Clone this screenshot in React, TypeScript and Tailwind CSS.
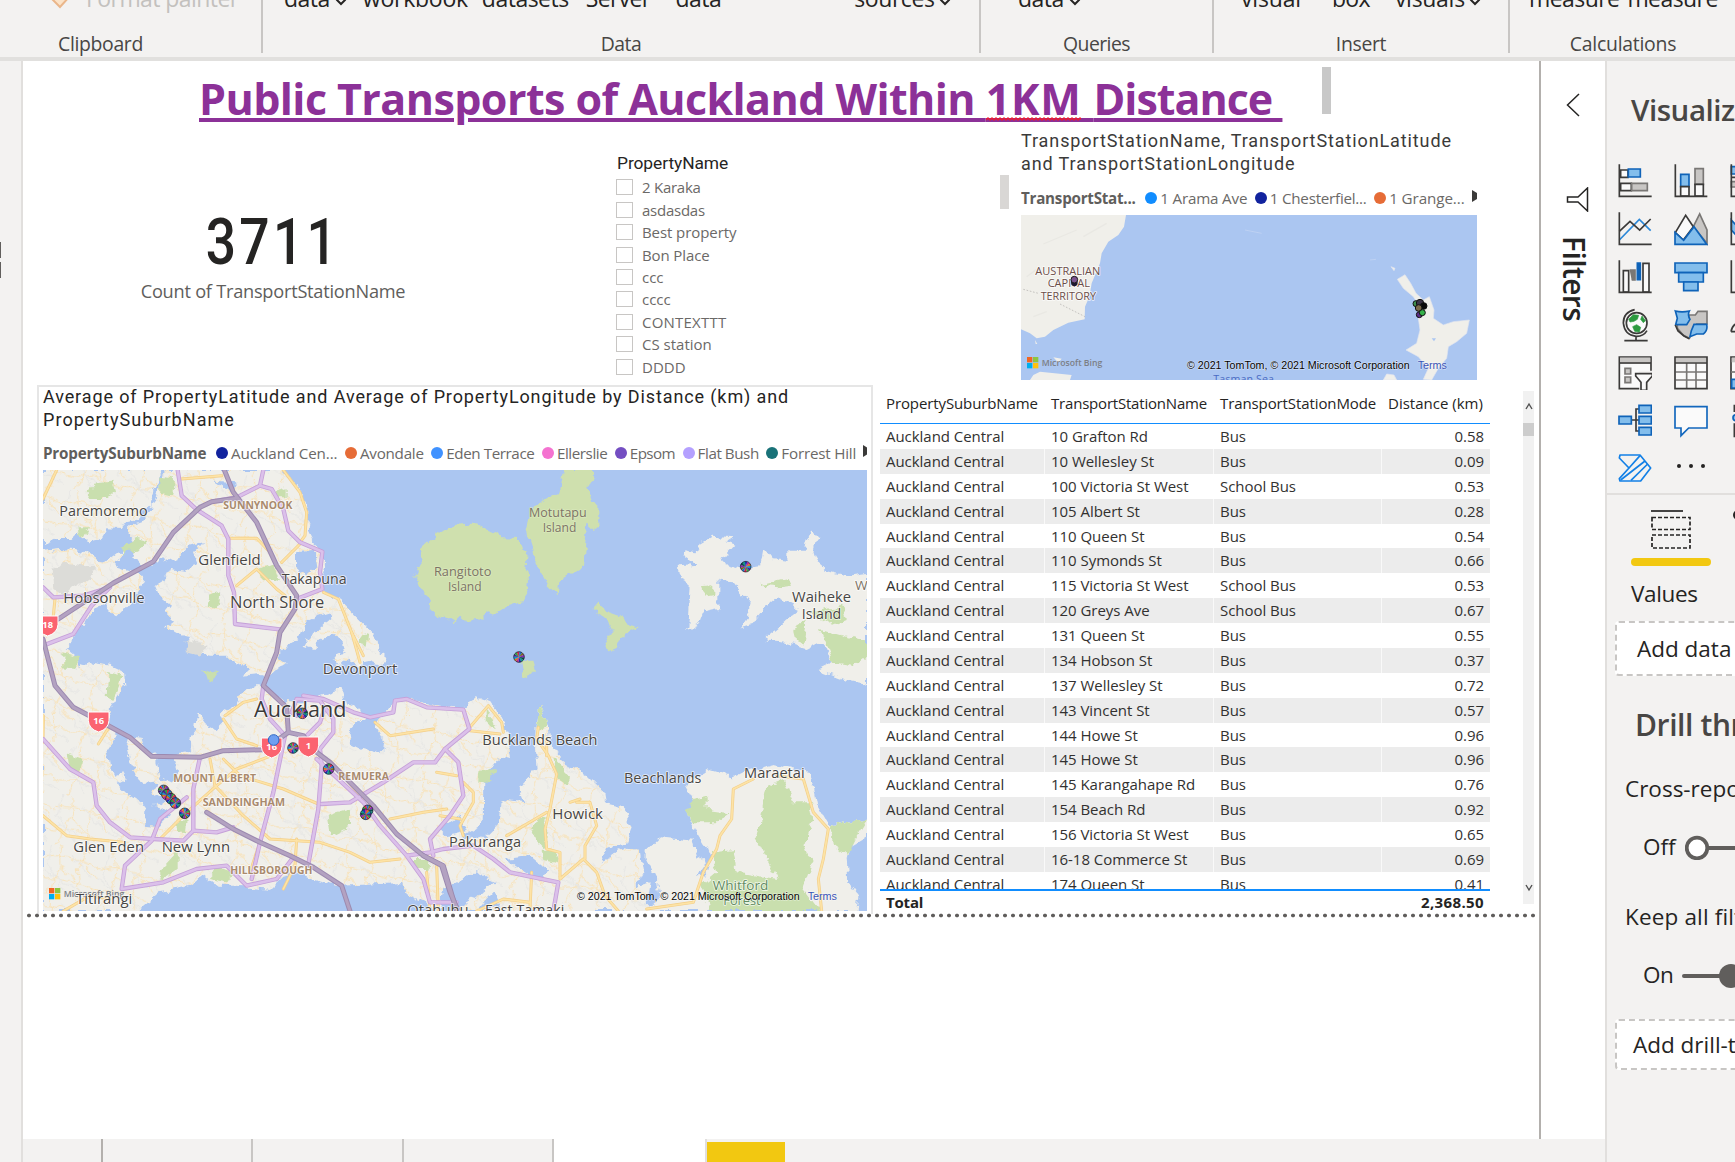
import { useLayoutEffect, useRef, useState, type ReactNode } from 'react';

/** Spreads its text evenly over a width of w pixels. */
function Fit({ w, className = '', children }: { w: number; className?: string; children: string }) {
  const ref = useRef<HTMLSpanElement>(null);
  const [spacing, setSpacing] = useState(0);
  useLayoutEffect(() => {
    if (ref.current) setSpacing((w - ref.current.offsetWidth) / children.length);
  }, [w, children]);
  return (
    <span ref={ref} className={`inline-block whitespace-pre ${className}`} style={{ letterSpacing: spacing }}>
      {children}
    </span>
  );
}

/* ---------- ribbon ---------- */

function Chevron({ className = '' }: { className?: string }) {
  return (
    <svg viewBox="0 0 12 8" className={`h-2 w-3 shrink-0 ${className}`}>
      <path d="M1.5 1.5 6 6l4.5-4.5" fill="none" stroke="#252423" strokeWidth="2" />
    </svg>
  );
}

function RibbonGroup({ label, labelWidth, className, children }: { label: string; labelWidth: number; className: string; children: ReactNode }) {
  return (
    <div className={`relative flex h-[53px] shrink-0 flex-col ${className}`}>
      <div className="-mt-[18px] flex h-8 items-center text-[23px] leading-8 text-[#252423]">{children}</div>
      <div className="mt-[18px] flex justify-center text-[19.4px] leading-6 text-[#484644]">
        <Fit w={labelWidth}>{label}</Fit>
      </div>
    </div>
  );
}

function Ribbon() {
  return (
    <div className="flex h-[61px] shrink-0 overflow-hidden border-b-4 border-[#e1e0de] bg-[#f3f2f1]">
      <RibbonGroup label="Clipboard" labelWidth={85} className="w-[263px] border-r-2 border-[#c8c6c4] pr-[60px]">
        <svg viewBox="0 0 24 20" className="mt-[7px] ml-12 h-5 w-6 shrink-0">
          <path d="M1 4 L12 15 L22 4 L12 0 Z" fill="#fbe3c8" stroke="#eab68a" strokeWidth="2" />
          <path d="M8 6 L17 7" stroke="#c8c6c4" strokeWidth="2" />
        </svg>
        <Fit w={153} className="ml-[14px] text-[#c3c1be]">Format painter</Fit>
      </RibbonGroup>
      <RibbonGroup label="Data" labelWidth={41} className="w-[718px] border-r-2 border-[#c8c6c4]">
        <Fit w={46} className="ml-[21px]">data</Fit>
        <Chevron className="mt-2 ml-[5px]" />
        <Fit w={105} className="ml-4">workbook</Fit>
        <Fit w={87} className="ml-[14px]">datasets</Fit>
        <Fit w={65} className="ml-[17px]">Server</Fit>
        <Fit w={46} className="ml-[25px]">data</Fit>
        <Fit w={80} className="ml-[133px]">sources</Fit>
        <Chevron className="mt-2 ml-[5px]" />
      </RibbonGroup>
      <RibbonGroup label="Queries" labelWidth={67} className="w-[233px] border-r-2 border-[#c8c6c4]">
        <Fit w={46} className="ml-[37px]">data</Fit>
        <Chevron className="mt-2 ml-[5px]" />
      </RibbonGroup>
      <RibbonGroup label="Insert" labelWidth={50} className="w-[296px] border-r-2 border-[#c8c6c4]">
        <Fit w={60} className="ml-[27px]">visual</Fit>
        <Fit w={38} className="ml-[31px]">box</Fit>
        <Fit w={70} className="ml-[25px]">visuals</Fit>
        <Chevron className="mt-2 ml-[4px]" />
      </RibbonGroup>
      <RibbonGroup label="Calculations" labelWidth={106} className="w-[226px]">
        <Fit w={90} className="ml-[19px]">measure</Fit>
        <Fit w={90} className="ml-[8px]">measure</Fit>
      </RibbonGroup>
    </div>
  );
}

/* ---------- legends ---------- */

type LegendItem = { name: string; w: number; dot: string };

const transportLegend: LegendItem[] = [
  { name: '1 Arama Ave', w: 87, dot: 'bg-[#118dff]' },
  { name: '1 Chesterfiel...', w: 97, dot: 'bg-[#12239e]' },
  { name: '1 Grange...', w: 75, dot: 'bg-[#e66c37]' },
];

const suburbLegend: LegendItem[] = [
  { name: 'Auckland Cen...', w: 106, dot: 'bg-[#12239e]' },
  { name: 'Avondale', w: 64, dot: 'bg-[#e66c37]' },
  { name: 'Eden Terrace', w: 88, dot: 'bg-[#4092ff]' },
  { name: 'Ellerslie', w: 50, dot: 'bg-[#f472d0]' },
  { name: 'Epsom', w: 45, dot: 'bg-[#744ec2]' },
  { name: 'Flat Bush', w: 61, dot: 'bg-[#b4a0ff]' },
  { name: 'Forrest Hill', w: 74.5, dot: 'bg-[#197278]' },
];

function Legend({ title, titleWidth, items }: { title: string; titleWidth: number; items: LegendItem[] }) {
  return (
    <div className="flex items-center overflow-hidden text-[15.2px] leading-6 text-[#6b6967]">
      <Fit w={titleWidth} className="mr-[2px] font-bold text-[#605e5c]">{title}</Fit>
      {items.map((item) => (
        <div key={item.name} className="ml-[7.6px] flex items-center gap-[3px]">
          <span className={`size-3 shrink-0 rounded-full ${item.dot}`} />
          <Fit w={item.w}>{item.name}</Fit>
        </div>
      ))}
      <svg viewBox="0 0 5 12" className="-mt-1 ml-[7px] h-3 w-[5px] shrink-0">
        <path d="M0 0 L10 6 L0 12Z" fill="#3b3a39" />
      </svg>
    </div>
  );
}

/* ---------- maps ---------- */

function MapText({ x, y, w, size, fill = '#484644', weight = 400, halo = '#ffffff', children }: { x: number; y: number; w: number; size: number; fill?: string; weight?: number; halo?: string; children: string }) {
  return (
    <text x={x} y={y} textLength={w} lengthAdjust="spacingAndGlyphs" fontSize={size} fontWeight={weight} fill={fill} stroke={halo} strokeWidth="5" strokeOpacity="0.75" strokeLinejoin="round" paintOrder="stroke">
      {children}
    </text>
  );
}

function BingMark({ x, y, w }: { x: number; y: number; w: number }) {
  return (
    <g>
      <rect x={x} y={y} width="16" height="16" fill="#f26522" />
      <rect x={x + 18} y={y} width="16" height="16" fill="#8dc63f" />
      <rect x={x} y={y + 18} width="16" height="16" fill="#00aeef" />
      <rect x={x + 18} y={y + 18} width="16" height="16" fill="#ffc20e" />
      <text x={x + 44} y={y + 27} textLength={w} lengthAdjust="spacingAndGlyphs" fontSize="29" fontWeight="600" fill="#7c7f86">Microsoft Bing</text>
    </g>
  );
}

function Attribution({ x, y }: { x: number; y: number }) {
  return (
    <g className="font-['Liberation_Sans']">
      <text x={x} y={y} fontSize="35" textLength="668" lengthAdjust="spacingAndGlyphs" fill="#000" stroke="#fff" strokeOpacity="0.6" strokeWidth="3" paintOrder="stroke">© 2021 TomTom, © 2021 Microsoft Corporation</text>
      <text x={x + 692} y={y} fontSize="35" textLength="88" lengthAdjust="spacingAndGlyphs" fill="#3a52b4" stroke="#fff" strokeOpacity="0.6" strokeWidth="3" paintOrder="stroke">Terms</text>
    </g>
  );
}

const pieColours = ['#0e9c86', '#1c2fae', '#c02a8e', '#d9771c', '#1596cf', '#4a2694', '#35a23a', '#d4264a', '#1a6fc9', '#7d6a1a', '#8d27b0', '#0a4a4a'];

function Pie({ x, y, turn = 0 }: { x: number; y: number; turn?: number }) {
  const r = 16;
  return (
    <g transform={`translate(${x} ${y}) rotate(${turn})`}>
      {pieColours.map((c, i) => {
        const a = (i * Math.PI) / 6;
        const b = ((i + 1) * Math.PI) / 6;
        return <path key={c} d={`M0 0L${r * Math.cos(a)} ${r * Math.sin(a)}A${r} ${r} 0 0 1 ${r * Math.cos(b)} ${r * Math.sin(b)}Z`} fill={c} />;
      })}
      <circle r={r} fill="none" stroke="#1b1b2a" strokeOpacity="0.75" strokeWidth="2.5" />
    </g>
  );
}

function Shield({ x, y, label }: { x: number; y: number; label: string }) {
  return (
    <g transform={`translate(${x} ${y})`}>
      <path d="M-31 -25 H31 V0 Q30 26 0 35 Q-30 26 -31 0Z" fill="#fb6370" stroke="#fff" strokeWidth="3" />
      <text y="11" textAnchor="middle" fontSize="28" fontWeight="700" fill="#fff">{label}</text>
    </g>
  );
}

const land = [
  'M39 273H388L380 320L362 350L368 385L335 395L330 420L290 430L275 450L235 448L215 480L175 487L148 465L130 480L80 480L39 498Z',
  'M402 273H755L790 305L822 350L835 400L830 450L850 490L882 520L882 565L868 605L885 645L930 665L965 700L1000 735L1040 780L1045 815L1070 835L1060 858L1020 850L985 858L955 845L930 858L905 845L920 825L945 820L935 790L915 765L880 780L850 810L820 800L838 765L875 745L905 720L900 700L860 712L830 725L812 770L780 790L745 830L770 850L740 870L715 895L690 885L640 890L655 865L610 850L590 830L540 830L500 820L470 800L480 775L440 765L405 745L432 725L405 700L420 680L385 650L372 620L405 600L420 570L465 575L490 555L505 560L490 525L520 490L480 500L455 530L415 548L395 535L370 560L335 560L310 530L318 500L296 470L298 440L340 425L365 400L370 370L385 330Z',
  'M39 515L85 510L130 513L170 520L205 545L225 548L250 535L280 512L282 530L250 550L265 565L320 580L342 605L330 640L300 670L262 712L245 700L225 675L190 690L165 735L135 750L130 790L110 810L140 835L150 870L180 850L240 860L282 880L286 920L260 960L240 990L236 1040L262 1060L232 1110L240 1160L255 1190L280 1180L290 1200L260 1215L285 1235L330 1265L350 1290L345 1340L385 1345L420 1310L400 1290L370 1280L410 1265L370 1240L380 1210L340 1215L300 1150L290 1110L300 1075L335 1080L345 1120L375 1130L385 1170L395 1200L430 1215L445 1180L430 1130L480 1120L478 1080L495 1060L500 1000L525 1035L560 1050L580 1030L570 1005L620 975L640 940L690 915L720 940L760 970L830 970L880 950L935 930L945 970L1010 1010L985 1030L955 1060L960 1090L1000 1110L1055 1125L1060 1090L1035 1040L1090 975L1110 955L1135 960L1240 985L1305 990L1320 965L1340 955L1385 970L1418 1020L1430 1060L1446 1128L1400 1145L1360 1200L1358 1335L1300 1370L1360 1380L1410 1330L1415 1260L1480 1270L1465 1230L1520 1170L1515 1105L1517 1040L1530 975L1548 1030L1560 1090L1600 1150L1670 1190L1720 1240L1725 1270L1782 1285L1805 1350L1790 1390L1735 1410L1710 1450L1735 1440L1750 1420L1790 1405L1830 1420L1840 1480L1820 1520L1862 1510L1850 1580L1890 1560L1880 1500L1850 1440L1850 1415L1890 1375L1990 1385L2002 1440L2020 1430L2025 1460L2000 1490L2030 1485L2040 1440L2020 1390L1995 1350L1972 1300L1990 1265L1965 1220L2030 1170L2110 1195L2140 1180L2235 1155L2340 1180L2360 1280L2395 1340L2511 1322V1370L2460 1400L2450 1440L2455 1510L2485 1550L2480 1596H1215L1180 1570L1130 1545L1120 1512L930 1520L850 1500L800 1480L760 1490L720 1530L620 1520L560 1520L520 1488L480 1520L390 1540L325 1596H39Z',
  'M1943 565L2000 560L1965 535L1970 515L2000 520L2008 495L2050 470L2110 475L2085 490L2110 500L2075 540L2085 555L2140 570L2190 565L2200 510L2225 540L2275 545L2275 515L2325 515L2330 490L2345 450L2362 470L2350 515L2360 550L2390 575L2450 590L2511 582V810L2480 800L2440 780L2370 790L2330 810L2260 790L2215 785L2210 770L2260 730L2310 690L2240 655L2200 690L2165 735L2130 745L2160 700L2165 680L2140 650L2110 610L2065 605L2065 690L2020 700L2005 740L1975 752L1982 615L1950 600Z',
  'M2210 783L2330 800L2375 785L2395 830L2410 845L2360 870L2440 900L2511 915V760Z',
];

const islands = [
  'M1155 590L1178 545L1173 510L1222 464L1262 442L1340 436L1395 463L1420 478L1466 480L1477 512L1492 518L1486 560L1500 600L1496 640L1477 668L1420 688L1385 708L1370 700L1345 725L1315 730L1290 710L1270 730L1240 710L1220 718L1198 695L1203 660L1182 650L1168 610Z',
  'M1603 273H1692V300L1672 325L1688 370L1708 382L1708 438L1688 453L1675 440L1662 560L1585 608L1580 643L1552 615L1527 570L1502 500L1489 460L1503 400L1542 367L1587 342Z',
  'M1690 690L1708 668L1725 695L1780 715L1790 735L1830 745L1775 775L1760 810L1735 820L1720 795L1745 755L1735 725Z',
  'M1470 845L1510 845L1518 870L1500 890L1480 900Z',
];

const parks = [
  'M170 345L200 310L250 305L258 335L230 360L180 360Z', 'M385 290L435 295L430 350L385 340Z', 'M142 445L180 445L165 475L148 468Z',
  'M730 335L770 325L770 355L740 355Z', 'M270 500L320 480L355 490L330 515L280 520Z', 'M535 650L570 640L560 690L530 680Z', 'M690 570L730 555L750 610L700 600Z',
  'M990 770L1015 765L1010 800L990 795Z', 'M100 820L150 835L135 870L100 865Z', 'M235 880L280 890L250 960L230 950Z', 'M890 1310L960 1290L960 1340L900 1370Z',
  'M385 1480L440 1420L440 1470L400 1500Z', 'M1150 1440L1200 1440L1195 1470L1155 1470Z', 'M560 1460L610 1480L590 1510L540 1500Z', 'M1370 980L1400 1050L1370 1040Z',
  'M1517 1045L1530 975L1548 1030L1535 1050Z', 'M1570 1130L1620 1190L1610 1220L1580 1200Z', 'M1345 1180L1400 1170L1380 1210L1345 1205Z', 'M1500 1340L1550 1310L1545 1410L1520 1390Z',
  'M1535 1415L1585 1415L1580 1450L1540 1440Z', 'M1990 1260L2030 1250L2030 1290L2100 1300L2060 1330L1990 1330L1970 1300Z', 'M2210 1220L2260 1200L2290 1270L2340 1270L2350 1320L2320 1400L2345 1460L2320 1530L2370 1596H2040L2010 1520L2060 1480L2040 1420L2110 1410L2120 1480L2240 1500L2180 1380L2190 1330Z',
  'M2400 1340L2511 1322L2480 1370L2450 1430L2410 1400Z', 'M2290 750L2330 725L2320 800L2295 790Z', 'M2340 700L2440 680L2450 720L2400 740Z', 'M2370 750L2440 770L2511 790V830L2470 860L2410 850Z', 'M2010 625L2050 622L2050 645L2020 650Z', 'M2190 620L2270 600L2280 620L2250 625Z',
  'M110 1120L160 1140L150 1180L120 1170Z', 'M520 870L560 880L550 910L530 900Z', 'M440 1330L470 1320L465 1360L440 1355Z',
];

const motorways = [
  'M583 273L610 340L680 430L740 560L800 650L795 690L750 760L740 820L700 920L770 985L775 1060L820 1070L860 1120L900 1150L1030 1280L1100 1365L1180 1430L1240 1460L1280 1596',
  'M85 720L250 612L370 548L430 460L510 385L545 368L620 358',
  'M39 780L75 920L130 985L235 1040L300 1075L365 1132L510 1135L580 1115L700 1112L775 1060',
  'M530 1300L610 1350L690 1390L780 1430L850 1465L935 1520L960 1596',
  'M1180 1430L1235 1460L1260 1540L1285 1596',
];

const arterials = [
  'M443 273L455 350L500 392L575 440L595 480L595 590L612 640L615 735L755 752',
  'M700 273L690 320L620 355L545 368',
  'M690 320L725 330L760 390L775 455L810 490L877 518L870 580L877 630L800 660',
  'M39 625L70 655L160 650L240 625L185 680L130 765L39 800',
  'M39 1080L120 1170L190 1210L200 1280L240 1330L300 1375L370 1380L460 1385L490 1355L560 1360L610 1345',
  'M510 1135L490 1230L490 1355M470 1255L390 1320L365 1385L285 1460L275 1530L400 1510L500 1470L590 1460L650 1520L740 1500L790 1435',
  'M700 920L695 960L720 1020L765 1070L730 1240L690 1390L665 1500',
  'M835 1455L865 1290L875 1160L870 1110L910 1060L910 1020L870 965L800 960L785 1000L800 1010',
  'M820 950L880 960L970 1000L1020 1015L1090 1000L1095 965L1130 960L1190 985L1300 992L1318 1050L1245 1110L1215 1150L1150 1150L1060 1210L960 1270L875 1275',
  'M860 1140L1000 1270L1050 1340L1130 1430L1180 1500L1200 1570L1280 1570M1130 1430L1200 1420L1240 1410L1330 1400L1390 1440L1440 1480L1585 1510L1570 1596',
  'M1245 1110L1285 1150L1300 1250L1260 1310L1200 1380L1210 1430',
  'M820 1080L870 1030L880 1000',
];

const yellowRoads = [
  'M80 273L39 360', 'M760 273L810 340L830 400L825 470L810 490', 'M455 300L575 290', 'M600 478L680 478L720 520', 'M620 620L680 570L740 630L765 650M755 550L810 495M740 560L770 600',
  'M880 640L925 660L965 760L1000 830', 'M585 1010L640 970L680 960M580 1020L620 1080L680 1100', 'M390 1380L470 1300L560 1220L620 1170L750 1120', 'M540 1140L555 1220L640 1310L720 1380L870 1390L960 1420L1020 1450L1110 1440',
  'M580 1140L630 1190L760 1230L865 1275M865 1120L930 1180L1000 1260', 'M39 1310L110 1370L180 1380L280 1390', 'M800 1380L795 1460L760 1530', 'M1035 1030L1080 1070L1210 1050M1080 1320L1180 1300L1250 1290',
  'M1315 1050L1375 980L1415 1030L1420 1060M1320 1055L1410 1065', 'M1220 1180L1280 1190M1300 1210L1330 1240L1330 1270L1290 1340L1300 1370M1230 1310L1290 1320',
  'M1525 1045L1520 1080L1555 1130L1580 1185L1560 1290L1545 1350L1550 1410L1590 1420L1590 1500L1660 1440L1700 1480L1725 1550L1765 1596', 'M1430 1370L1550 1300M1550 1080L1550 1130M1640 1270L1680 1270L1700 1340L1665 1400L1665 1440M1620 1270L1650 1260',
  'M2170 1200L2110 1230L2105 1320L2070 1370L2060 1410L2020 1480L1990 1570L1850 1590', 'M2240 1190L2320 1200L2350 1300L2395 1350L2380 1440L2365 1500L2375 1596', 'M1340 1596L1420 1560L1500 1570M1500 1590L1505 1480M1200 1596L1190 1480M1220 1460L1225 1596',
  'M40 1010L39 1090M205 1095L240 1040M660 1480L690 1390M75 660L70 710', 'M100 1596L180 1550L240 1560', 'M965 760L990 850',
];

function PropertyMap() {
  return (
    <svg viewBox="39 273 2472 1323" preserveAspectRatio="none" className="block h-[441px] w-[824px] font-['Open_Sans']">
      <defs>
        <filter id="coast" x="-2%" y="-2%" width="104%" height="104%">
          <feTurbulence type="fractalNoise" baseFrequency="0.035" numOctaves="3" seed="4" result="n" />
          <feDisplacementMap in="SourceGraphic" in2="n" scale="28" xChannelSelector="R" yChannelSelector="G" />
        </filter>
        <pattern id="streets" width="170" height="150" patternUnits="userSpaceOnUse" patternTransform="rotate(12)">
          <path d="M0 40Q60 20 170 45M40 0L55 60L30 150M0 110L80 95L170 112M120 0L105 60L130 150M55 60L105 95M130 45L170 80" fill="none" stroke="#f8e2b8" strokeWidth="3" />
          <path d="M20 0L10 60L80 130M80 20L150 75M0 80L170 140" fill="none" stroke="#e6e6e4" strokeWidth="3" />
        </pattern>
        <clipPath id="urban">
          <path d="M39 273H1150V860H39Z M39 860H1850V1596H39Z" />
        </clipPath>
      </defs>
      <rect x="39" y="273" width="2472" height="1323" fill="#abc6f1" />
      <g filter="url(#coast)">
        {land.map((d) => <path key={d} d={d} fill="#f0efea" />)}
        <g clipPath="url(#urban)">
          {land.map((d) => <path key={d} d={d} fill="url(#streets)" />)}
        </g>
        {islands.map((d) => <path key={d} d={d} fill="#cfe0ae" />)}
        {parks.map((d) => <path key={d} d={d} fill="#c9dfae" />)}
        <path d="M65 570L110 555L195 565L180 610L150 600L100 650L70 630Z M470 790L530 800L510 830L470 820Z" fill="#dcdcd8" />
        <path d="M795 520L855 515L862 565L830 590L795 560Z M548 305L625 310L610 345L580 325Z M1225 1350L1290 1310L1310 1360L1250 1375Z M1430 1440L1500 1430L1560 1480L1520 1500Z M1240 1530L1340 1480L1400 1510L1330 1560L1260 1596H1230Z M1340 1596L1390 1540L1410 1580Z" fill="#abc6f1" />
      </g>
      <g fill="none" strokeLinejoin="round" strokeLinecap="round">
        {yellowRoads.map((d) => <path key={d} d={d} stroke="#f3cf8a" strokeWidth="9" />)}
        {yellowRoads.map((d) => <path key={d} d={d} stroke="#fde3a6" strokeWidth="5" />)}
        {arterials.map((d) => <path key={d} d={d} stroke="#c5a0d8" strokeWidth="13" />)}
        {arterials.map((d) => <path key={d} d={d} stroke="#dbc0ea" strokeWidth="8" />)}
        {motorways.map((d) => <path key={d} d={d} stroke="#9c8ab0" strokeWidth="15" />)}
        {motorways.map((d) => <path key={d} d={d} stroke="#b3a2c1" strokeWidth="9" />)}
      </g>
      <MapText x={88} y={410} w={265} size={43}>Paremoremo</MapText>
      <MapText x={580} y={391} w={207} size={30} weight={700} fill="#a98a6d">SUNNYNOOK</MapText>
      <MapText x={505} y={558} w={187} size={43}>Glenfield</MapText>
      <MapText x={755} y={615} w={195} size={43}>Takapuna</MapText>
      <MapText x={600} y={686} w={283} size={47}>North Shore</MapText>
      <MapText x={100} y={672} w={244} size={43}>Hobsonville</MapText>
      <MapText x={1212} y={592} w={172} size={37} fill="#7d7366" halo="#dcebbf">Rangitoto</MapText>
      <MapText x={1254} y={635} w={101} size={37} fill="#7d7366" halo="#dcebbf">Island</MapText>
      <MapText x={1497} y={415} w={173} size={37} fill="#7d7366" halo="#dcebbf">Motutapu</MapText>
      <MapText x={1538} y={458} w={101} size={37} fill="#7d7366" halo="#dcebbf">Island</MapText>
      <MapText x={2286} y={669} w={177} size={43}>Waiheke</MapText>
      <MapText x={2315} y={720} w={119} size={43}>Island</MapText>
      <MapText x={2475} y={634} w={38} size={37} fill="#7d7366">W</MapText>
      <MapText x={878} y={886} w={224} size={43}>Devonport</MapText>
      <MapText x={1357} y={1099} w={345} size={43}>Bucklands Beach</MapText>
      <MapText x={1782} y={1211} w={232} size={43}>Beachlands</MapText>
      <MapText x={2142} y={1198} w={182} size={43}>Maraetai</MapText>
      <MapText x={1567} y={1319} w={152} size={43}>Howick</MapText>
      <MapText x={1257} y={1404} w={216} size={43}>Pakuranga</MapText>
      <MapText x={130} y={1418} w={212} size={43}>Glen Eden</MapText>
      <MapText x={395} y={1418} w={205} size={43}>New Lynn</MapText>
      <BingMark x={57} y={1527} w={182} />
      <MapText x={138} y={1575} w={169} size={43}>Titirangi</MapText>
      <MapText x={1132} y={1608} w={184} size={43}>Otahuhu</MapText>
      <MapText x={1365} y={1608} w={238} size={43}>East Tamaki</MapText>
      <MapText x={2048} y={1533} w={167} size={40} fill="#628c62">Whitford</MapText>
      <MapText x={2080} y={1578} w={112} size={40} fill="#628c62">Forest</MapText>
      <MapText x={430} y={1208} w={248} size={31} weight={700} fill="#a98a6d">MOUNT ALBERT</MapText>
      <MapText x={518} y={1280} w={247} size={31} weight={700} fill="#a98a6d">SANDRINGHAM</MapText>
      <MapText x={925} y={1202} w={152} size={31} weight={700} fill="#a98a6d">REMUERA</MapText>
      <MapText x={601} y={1485} w={246} size={31} weight={700} fill="#a98a6d">HILLSBOROUGH</MapText>
      <MapText x={672} y={1013} w={277} size={63} fill="#3b3a39">Auckland</MapText>
      <Shield x={53} y={736} label="18" />
      <Shield x={206} y={1024} label="16" />
      <Shield x={725} y={1102} label="16" />
      <Shield x={835} y={1099} label="1" />
      <circle cx="731" cy="1083" r="16" fill="#6f9ff0" stroke="#2a66c4" strokeWidth="3" />
      <Pie x={817} y={1003} />
      <Pie x={789} y={1107} turn={50} />
      <Pie x={896} y={1170} turn={80} />
      <Pie x={401} y={1234} />
      <Pie x={411} y={1247} turn={60} />
      <Pie x={423} y={1259} turn={100} />
      <Pie x={436} y={1272} turn={20} />
      <Pie x={464} y={1303} turn={140} />
      <Pie x={1013} y={1294} turn={15} />
      <Pie x={1007} y={1306} turn={200} />
      <Pie x={1467} y={834} turn={35} />
      <Pie x={2147} y={563} turn={230} />
      <Attribution x={1641} y={1563} />
    </svg>
  );
}

function TransportMap() {
  return (
    <svg viewBox="93 285 1368 495" preserveAspectRatio="none" className="mt-[5px] block h-[165px] w-[456px] font-['Open_Sans']">
      <rect x="93" y="285" width="1368" height="495" fill="#abc6f1" />
      <path d="M93 285H408L402 320L385 345L355 365L335 400L330 430L305 490L298 530L285 560L284 598L235 608L190 630L165 650L140 655L120 640L93 628Z" fill="#f0efea" />
      <path d="M160 372L260 330M280 350L350 310M130 590L170 575M110 470L150 440" stroke="#e9e8e3" strokeWidth="4" fill="none" />
      <path d="M100 508L145 520M210 552L285 590" stroke="#c5c3c0" strokeWidth="3" strokeDasharray="5 5" fill="none" />
      <path d="M190 712L215 716L205 728Z M130 765L150 755L245 765L240 780H120Z M135 660L142 672L137 672Z" fill="#f0efea" />
      <path d="M1203 440L1215 445L1212 452Z M1222 478L1245 464L1262 490L1278 520L1300 540L1318 530L1332 570L1330 595L1360 615L1390 605L1438 600L1430 640L1400 665L1375 680L1370 715L1345 745L1325 780L1300 778L1315 745L1285 710L1248 690L1280 670L1290 630L1285 595L1290 560L1270 530L1240 505Z M1180 780L1190 762L1212 765L1220 780Z" fill="#f0efea" stroke="#e2e6ee" strokeWidth="2" />
      <path d="M1325 655L1338 655L1332 664Z" fill="#abc6f1" />
      <path d="M1140 420L1158 418M765 330L815 340" stroke="#bdd1f3" strokeWidth="3" />
      <MapText x={136} y={465} w={195} size={32} fill="#6b4d48">AUSTRALIAN</MapText>
      <MapText x={173} y={502} w={127} size={32} fill="#6b4d48">CAPITAL</MapText>
      <MapText x={152} y={539} w={166} size={32} fill="#6b4d48">TERRITORY</MapText>
      <circle cx="253" cy="488" r="10" fill="#1d1730" />
      <circle cx="253" cy="479" r="10" fill="#7b5490" stroke="#1b1b1b" strokeWidth="3" />
      <g stroke="#111" strokeWidth="3">
        <circle cx="1278" cy="551" r="9" fill="#3f8f4f" />
        <circle cx="1290" cy="549" r="11" fill="#3d3548" />
        <circle cx="1301" cy="558" r="10" fill="#090909" />
        <circle cx="1288" cy="584" r="9" fill="#5b2d86" />
        <circle cx="1286" cy="564" r="10" fill="#7a6a4a" />
        <circle cx="1297" cy="578" r="9" fill="#35b24a" />
      </g>
      <BingMark x={111} y={711} w={182} />
      <Attribution x={591} y={748} />
      <text x="670" y="790" fontSize="32" textLength="182" fill="#4a6cc4">Tasman Sea</text>
    </svg>
  );
}

/* ---------- table ---------- */

const stations: [string, string, string][] = [
  ['10 Grafton Rd', 'Bus', '0.58'],
  ['10 Wellesley St', 'Bus', '0.09'],
  ['100 Victoria St West', 'School Bus', '0.53'],
  ['105 Albert St', 'Bus', '0.28'],
  ['110 Queen St', 'Bus', '0.54'],
  ['110 Symonds St', 'Bus', '0.66'],
  ['115 Victoria St West', 'School Bus', '0.53'],
  ['120 Greys Ave', 'School Bus', '0.67'],
  ['131 Queen St', 'Bus', '0.55'],
  ['134 Hobson St', 'Bus', '0.37'],
  ['137 Wellesley St', 'Bus', '0.72'],
  ['143 Vincent St', 'Bus', '0.57'],
  ['144 Howe St', 'Bus', '0.96'],
  ['145 Howe St', 'Bus', '0.96'],
  ['145 Karangahape Rd', 'Bus', '0.76'],
  ['154 Beach Rd', 'Bus', '0.92'],
  ['156 Victoria St West', 'Bus', '0.65'],
  ['16-18 Commerce St', 'Bus', '0.69'],
  ['174 Queen St', 'Bus', '0.41'],
];

const columns = 'grid grid-cols-[165px_169px_168px_108px]';

function StationTable() {
  return (
    <div className="ml-[7px] w-[610px] text-[15px] text-[#323130]">
      <div className={`${columns} h-[39px] justify-items-start border-b border-[#118dff] pt-[6px] leading-6 text-[#252423]`}>
        <Fit w={152} className="ml-[6px]">PropertySuburbName</Fit>
        <Fit w={156} className="ml-[6px]">TransportStationName</Fit>
        <Fit w={156} className="ml-[6px]">TransportStationMode</Fit>
        <Fit w={95} className="ml-[6px]">Distance (km)</Fit>
      </div>
      <div className="h-[465px] overflow-hidden">
        {stations.map(([name, mode, km]) => (
          <div key={name} className={`${columns} h-[24.88px] leading-[24.88px] tracking-[-0.04px] even:bg-[#ececec]`}>
            <span className="border-r border-white/70 pl-[6px]">Auckland Central</span>
            <span className="border-r border-white/70 pl-[6px]">{name}</span>
            <span className="border-r border-white/70 pl-[6px]">{mode}</span>
            <span className="pr-[6px] text-right">{km}</span>
          </div>
        ))}
      </div>
      <div className="flex justify-between border-t-2 border-[#118dff] px-[6px] leading-[22px] font-bold text-[#252423]">
        <Fit w={37}>Total</Fit>
        <Fit w={63}>2,368.50</Fit>
      </div>
    </div>
  );
}

function TableScrollbar() {
  return (
    <div className="mt-[6px] ml-[33px] flex h-[513px] w-[11px] flex-col items-center bg-[#f1f1f1]">
      <svg viewBox="0 0 8 8" className="mt-[11px] size-2"><path d="M1 7 4 2l3 5" fill="none" stroke="#505050" strokeWidth="1.4" /></svg>
      <div className="mt-[13px] h-[13px] w-full bg-[#cdcdcd]" />
      <svg viewBox="0 0 8 8" className="mt-auto mb-[12px] size-2"><path d="M1 1 4 6l3-5" fill="none" stroke="#505050" strokeWidth="1.4" /></svg>
    </div>
  );
}

/* ---------- report canvas ---------- */

const properties: [string, number][] = [
  ['2 Karaka', 59], ['asdasdas', 63], ['Best property', 94], ['Bon Place', 68], ['ccc', 22], ['cccc', 29], ['CONTEXTTT', 84], ['CS station', 70], ['DDDD', 44],
];

const titleRule = 'underline decoration-[4px] underline-offset-[3px]';

function Canvas() {
  return (
    <div className="flex w-[1516px] shrink-0 flex-col overflow-hidden bg-white">
      <div className="flex h-[66px] shrink-0">
        <h1 className="mt-[8px] ml-[176px] flex w-[1123px] text-[43px] leading-[60px] font-bold whitespace-pre text-[#8c3198]">
          <Fit w={787} className={titleRule}>{'Public Transports of Auckland Within '}</Fit>
          <span className="relative">
            <Fit w={108} className={titleRule}>{'1KM '}</Fit>
            <svg viewBox="0 0 95 4" className="absolute top-[48px] left-0 h-1 w-[95px]">
              <path d="M0 3l2-2 2 2 2-2 2 2 2-2 2 2 2-2 2 2 2-2 2 2 2-2 2 2 2-2 2 2 2-2 2 2 2-2 2 2 2-2 2 2 2-2 2 2 2-2 2 2 2-2 2 2 2-2 2 2 2-2 2 2 2-2 2 2 2-2 2 2 2-2 2 2 2-2 2 2 2-2 2 2 2-2 2 2 2-2 2 2 2-2 2 2 2-2 2 2 2-2 2 2" fill="none" stroke="#ee1c2e" strokeWidth="1.3" />
            </svg>
          </span>
          <Fit w={189} className={titleRule}>{'Distance '}</Fit>
        </h1>
        <div className="mt-[6px] h-[47px] w-[9px] bg-[#c8c8c8]" />
      </div>

      <div className="flex h-[258px] shrink-0">
        <div className="flex w-[500px] flex-col items-center pt-[85px]">
          <Fit w={164} className="scale-x-[0.82] font-['Roboto'] text-[65px] leading-[60px] font-medium text-[#252423]">3711</Fit>
          <Fit w={265} className="mt-[5px] text-[18.2px] leading-7 text-[#605e5c]">Count of TransportStationName</Fit>
        </div>
        <div className="ml-[93px] w-[384px] pt-[24px]">
          <Fit w={111} className="ml-px font-['Roboto'] text-[17.4px] leading-6 text-[#252423]">PropertyName</Fit>
          <div className="mt-px">
            {properties.map(([name, w]) => (
              <div key={name} className="flex h-[22.45px] items-center gap-[9px] text-[15px] leading-[22px] text-[#6b6967]">
                <span className="h-4 w-[17px] border border-[#c8c6c4] bg-white" />
                <Fit w={w}>{name}</Fit>
              </div>
            ))}
          </div>
        </div>
        <div className="mt-12 h-[34px] w-[9px] bg-[#d9d7d5]" />
        <div className="ml-3 w-[456px] pt-[2px]">
          <div className="mb-[10px] flex flex-col font-['Roboto'] text-[18px] leading-[23.4px] text-[#3b3a39]">
            <Fit w={431} className="self-start">TransportStationName, TransportStationLatitude</Fit>
            <Fit w={274} className="self-start">and TransportStationLongitude</Fit>
          </div>
          <Legend title="TransportStat..." titleWidth={115} items={transportLegend} />
          <TransportMap />
        </div>
      </div>

      <div className="flex h-[529px] shrink-0">
        <div className="ml-[14px] w-[836px] border-2 border-b-0 border-[#e6e6e6] pl-[4px]">
          <div className="-mt-[2px] mb-[9px] flex flex-col font-['Roboto'] text-[18px] leading-[23.4px] text-[#252423]">
            <Fit w={746} className="self-start">Average of PropertyLatitude and Average of PropertyLongitude by Distance (km) and</Fit>
            <Fit w={192} className="self-start">PropertySuburbName</Fit>
          </div>
          <div className="mb-[5px] w-[824px]">
            <Legend title="PropertySuburbName" titleWidth={163} items={suburbLegend} />
          </div>
          <PropertyMap />
        </div>
        <StationTable />
        <TableScrollbar />
      </div>
      <div className="-mt-px ml-[2px] h-[5px] shrink-0 bg-[radial-gradient(circle,#605e5c_1.6px,transparent_2.2px)] bg-[length:8px_5px]" />
    </div>
  );
}

/* ---------- side panes ---------- */

function FiltersPane() {
  return (
    <div className="flex flex-1 flex-col items-center border-l-2 border-[#b3b0ad] bg-white">
      <svg viewBox="0 0 14 24" className="mt-8 h-6 w-[14px]"><path d="M13 1 1.5 12 13 23" fill="none" stroke="#252423" strokeWidth="1.5" /></svg>
      <svg viewBox="0 0 23 25" className="mt-[70px] ml-[8px] h-[25px] w-[23px]">
        <path d="M21.5 1v23L12 15H1.5v-5H12Z" fill="none" stroke="#252423" strokeWidth="1.5" />
      </svg>
      <div className="mt-[24px] ml-[2px] text-[30px] leading-9 font-semibold tracking-[-0.6px] text-[#252423] [writing-mode:vertical-rl]">Filters</div>
    </div>
  );
}

const D = '#3b3a39';
const B = '#0f63b8';
const L = '#83beec';
const G = '#c8c6c4';
const M = '#797775';
const W = '#fafafa';

/* Every glyph is drawn on one shared sheet; its window is the 102-unit cell at (x, y). */
const visuals: { x: number; y: number; art: ReactNode }[] = [
  { x: 264, y: 312, art: <><path d="M272 330h22v22h-22z" fill={W} stroke={D} /><path d="M295 327h36v24h-36z" fill={L} stroke={B} /><path d="M272 370h32v22h-32z" fill={W} stroke={D} /><path d="M305 370h47v22h-47z" fill={G} stroke={M} /><path d="M268 313V409H365" stroke={D} fill="none" /></> },
  { x: 432, y: 312, art: <><path d="M452 343h25v37h-25z" fill={L} stroke={B} /><path d="M452 380h25v28h-25z" fill={W} stroke={D} /><path d="M495 326h25v47h-25z" fill={G} stroke={M} /><path d="M495 373h25v35h-25z" fill={W} stroke={D} /><path d="M436 313V409H532" stroke={D} fill="none" /></> },
  { x: 600, y: 312, art: <><path d="M604 320h96v22h-96z" fill={L} stroke={B} /><path d="M604 365h96v16h-96z" fill={G} stroke={M} /><path d="M604 313V409H700M604 352h90" stroke={D} fill="none" /></> },
  { x: 264, y: 456, art: <><path d="M268 540L328 478L362 512" stroke="#2b88d8" fill="none" /><path d="M268 514L300 484L329 510L362 477" stroke={D} fill="none" /><path d="M268 457V553H365" stroke={D} fill="none" /></> },
  { x: 432, y: 456, art: <><path d="M490 500L509 462L531 510V550Z" fill={G} stroke={M} /><path d="M436 518L467 466L490 500L460 540Z" fill={W} stroke={D} /><path d="M435 517L461 541L492 500L530 553H435Z" fill={L} stroke={B} /></> },
  { x: 600, y: 456, art: <><path d="M604 480L622 500V530L604 510Z" fill={L} stroke={B} /><path d="M604 457V553H700" stroke={D} fill="none" /></> },
  { x: 264, y: 600, art: <><path d="M280 632h16v64h-16z" fill={W} stroke={D} /><path d="M299 630h16v30h-10" fill={M} stroke={M} /><path d="M322 609h9v50h-9z" fill={B} stroke={B} /><path d="M339 610h18v86h-18z" fill={W} stroke={D} /><path d="M268 601V697H365" stroke={D} fill="none" /></> },
  { x: 432, y: 600, art: <g fill={L} stroke={B}><path d="M435 609h96v29h-96z" /><path d="M446 638h74v28h-74z" /><path d="M461 666h43v26h-43z" /></g> },
  { x: 600, y: 600, art: <path d="M604 601V697H700" stroke={D} fill="none" /> },
  { x: 264, y: 744, art: <><circle cx="320" cy="789" r="31" fill={W} stroke={D} /><path d="M296 778l14-14 16 2-4 12-10 6-12 2zM308 800l12-6 12 8-4 14-14-2zM336 768l10 14-6 6-8-10z" fill="#2c9a3f" stroke="#2c9a3f" strokeWidth="2" /><path d="M314 749Q280 757 280 789Q284 826 318 829Q340 830 351 812M318 829v12M283 842h70" stroke={D} fill="none" /></> },
  { x: 432, y: 744, art: <><path d="M477 765H496L504 754H531V792L500 792L478 835L460 826L442 805V792H470Z" fill={G} stroke={M} /><path d="M436 753Q456 758 478 753Q472 765 480 778L470 794H437L442 775Z" fill={L} stroke={B} /><path d="M492 793H530Q534 812 520 822H500L480 830L484 812Z" fill={L} stroke={B} /><path d="M436 795L444 813L462 828L478 836" fill="none" stroke={D} /></> },
  { x: 600, y: 744, art: <path d="M603 815Q606 795 625 787M603 815H630" stroke={D} fill="none" /> },
  { x: 264, y: 888, art: <><path d="M268 891h95v95h-95z" fill={W} stroke={D} /><path d="M270 893h91v14h-91z" fill={G} stroke="none" /><path d="M268 909h95" stroke={D} /><path d="M285 925h17v17h-17zM285 951h17v17h-17z" fill={G} stroke={M} /><path d="M326 932h60v62h-58z" fill="#f3f2f1" stroke="none" /><path d="M317 941H367V948L350 967V991H333V967L317 948Z" fill={W} stroke={D} /></> },
  { x: 432, y: 888, art: <><path d="M435 891h96v95h-96z" fill={W} stroke="none" /><path d="M437 893h92v14h-92z" fill={G} stroke="none" /><path d="M470 910v74M498 910v74M437 936h92M437 960h92" stroke={M} /><path d="M435 891h96v95h-96zM435 909h96" fill="none" stroke={D} /></> },
  { x: 600, y: 888, art: <><path d="M603 891h96v95h-96z" fill={W} stroke={D} /><path d="M605 893h92v14h-92z" fill={G} stroke="none" /><path d="M605 958h92v26h-92z" fill={L} stroke={B} /><path d="M603 936h92" stroke={M} /></> },
  { x: 264, y: 1032, art: <><path d="M304 1080H318M328 1047H318V1113H328M318 1080H328" stroke={D} fill="none" /><g fill={L} stroke={B}><path d="M267 1069h37v23h-37zM327 1036h37v23h-37zM327 1069h37v23h-37zM327 1102h37v23h-37z" /></g></> },
  { x: 432, y: 1032, art: <path d="M435 1040H531V1104H476L453 1127V1104H435Z" fill={W} stroke="#1267bd" /> },
  { x: 600, y: 1032, art: <><path d="M613 1034v22M613 1090v42" stroke={D} /><circle cx="618" cy="1073" r="9" fill={L} stroke={B} /></> },
  { x: 264, y: 1176, art: <g fill="none" stroke="#1380e6" strokeLinejoin="round"><path d="M270 1185H330L362 1224L332 1263H270L268 1256L297 1224L268 1194Z" /><path d="M297 1224L330 1187M272 1260L345 1203M303 1261L353 1212" /></g> },
  { x: 432, y: 1176, art: <g fill="#252423" stroke="none"><circle cx="447" cy="1218" r="6" /><circle cx="483" cy="1218" r="6" /><circle cx="519" cy="1218" r="6" /></g> },
];

function DropWell({ children, className }: { children: string; className: string }) {
  return (
    <div className={`ml-2 w-60 shrink-0 rounded border-2 border-dashed border-[#c8c6c4] bg-white whitespace-nowrap ${className}`}>{children}</div>
  );
}

function VisualizationsPane() {
  return (
    <div className="flex w-[130px] shrink-0 flex-col overflow-hidden border-l-2 border-[#e1dfdd] bg-[#f3f2f1] text-[22.5px] leading-8 whitespace-nowrap text-[#252423]">
      <div className="mt-[29px] ml-[24px] text-[29.5px] leading-10 font-semibold tracking-[-0.45px] text-[#484644]">Visualizations</div>
      <div className="mt-[34px] ml-[11px] grid w-[146px] shrink-0 grid-cols-[34px_34px_34px] gap-x-[22px] gap-y-[14px]">
        {visuals.map(({ x, y, art }) => (
          <svg key={`${x}-${y}`} viewBox={`${x} ${y} 102 102`} className="size-[34px]" strokeWidth="5">{art}</svg>
        ))}
      </div>
      <div className="mt-[7px] h-[2px] shrink-0 bg-[#e1dfdd]" />
      <div className="mt-[15px] flex h-[39px] shrink-0">
        <svg viewBox="0 0 40 39" className="ml-[44px] h-[39px] w-10 shrink-0">
          <path d="M0 1h32" stroke="#252423" strokeWidth="1.7" />
          <path d="M1 7.5h38v12H1zM1 25h38v13H1z" fill="none" stroke="#252423" strokeWidth="1.7" strokeDasharray="4 2" />
        </svg>
        <div className="ml-[42px] h-[10px] w-3 shrink-0 rounded-full bg-[#252423]" />
      </div>
      <div className="mt-[9px] ml-[24px] h-2 w-20 shrink-0 rounded-full bg-[#f2c811]" />
      <div className="mt-[12px] ml-[24px]"><Fit w={67}>Values</Fit></div>
      <DropWell className="mt-[11px] h-[55px] pl-[20px] leading-[52px]">Add data fields here</DropWell>
      <div className="mt-[29px] ml-[28px] text-[30px] leading-10 font-semibold tracking-[-0.4px] text-[#484644]">Drill through</div>
      <div className="mt-[28px] ml-[18px]">Cross-report</div>
      <div className="mt-[26px] ml-[36px] flex items-center">
        <Fit w={33}>Off</Fit>
        <svg viewBox="0 0 60 26" className="ml-[9px] h-[26px] w-[60px] shrink-0">
          <path d="M22 14h40" stroke="#605e5c" strokeWidth="4" />
          <circle cx="12" cy="14" r="10.3" fill="#fff" stroke="#605e5c" strokeWidth="3.8" />
        </svg>
      </div>
      <div className="mt-[38px] ml-[18px] tracking-[0.15px]">Keep all filters</div>
      <div className="mt-[26px] ml-[36px] flex items-center">
        <Fit w={30}>On</Fit>
        <svg viewBox="0 0 70 26" className="ml-[9px] h-[26px] w-[70px] shrink-0">
          <path d="M2 14h48" stroke="#605e5c" strokeWidth="4" strokeLinecap="round" />
          <circle cx="49" cy="14" r="12" fill="#605e5c" />
        </svg>
      </div>
      <DropWell className="mt-[28px] h-[51px] pl-[16px] leading-[48px]">Add drill-through fields here</DropWell>
    </div>
  );
}

/* ---------- page ---------- */

export default function App() {
  return (
    <div className="flex h-[1162px] w-[1735px] flex-col overflow-hidden bg-[#f3f2f1] font-['Open_Sans',sans-serif]">
      <Ribbon />
      <div className="flex min-h-0 flex-1">
        <div className="w-[23px] shrink-0 border-r-2 border-[#e1dfdd] pt-[181px]">
          <div className="h-4 w-px bg-[#605e5c]" />
          <div className="mt-1 h-4 w-px bg-[#605e5c]" />
        </div>
        <div className="flex w-[1582px] shrink-0 flex-col">
          <div className="flex h-[1078px] shrink-0">
            <Canvas />
            <FiltersPane />
          </div>
          <div className="flex flex-1">
            <div className="w-[80px] border-r-2 border-[#b3b0ad]" />
            <div className="w-[150px] border-r-2 border-[#c8c6c4]" />
            <div className="w-[151px] border-r-2 border-[#c8c6c4]" />
            <div className="w-[150px] border-r-2 border-[#c8c6c4]" />
            <div className="w-[153px] border-r-2 border-[#e1dfdd] bg-white" />
            <div className="mt-[3px] w-[78px] bg-[#f2c811]" />
          </div>
        </div>
        <VisualizationsPane />
      </div>
    </div>
  );
}
